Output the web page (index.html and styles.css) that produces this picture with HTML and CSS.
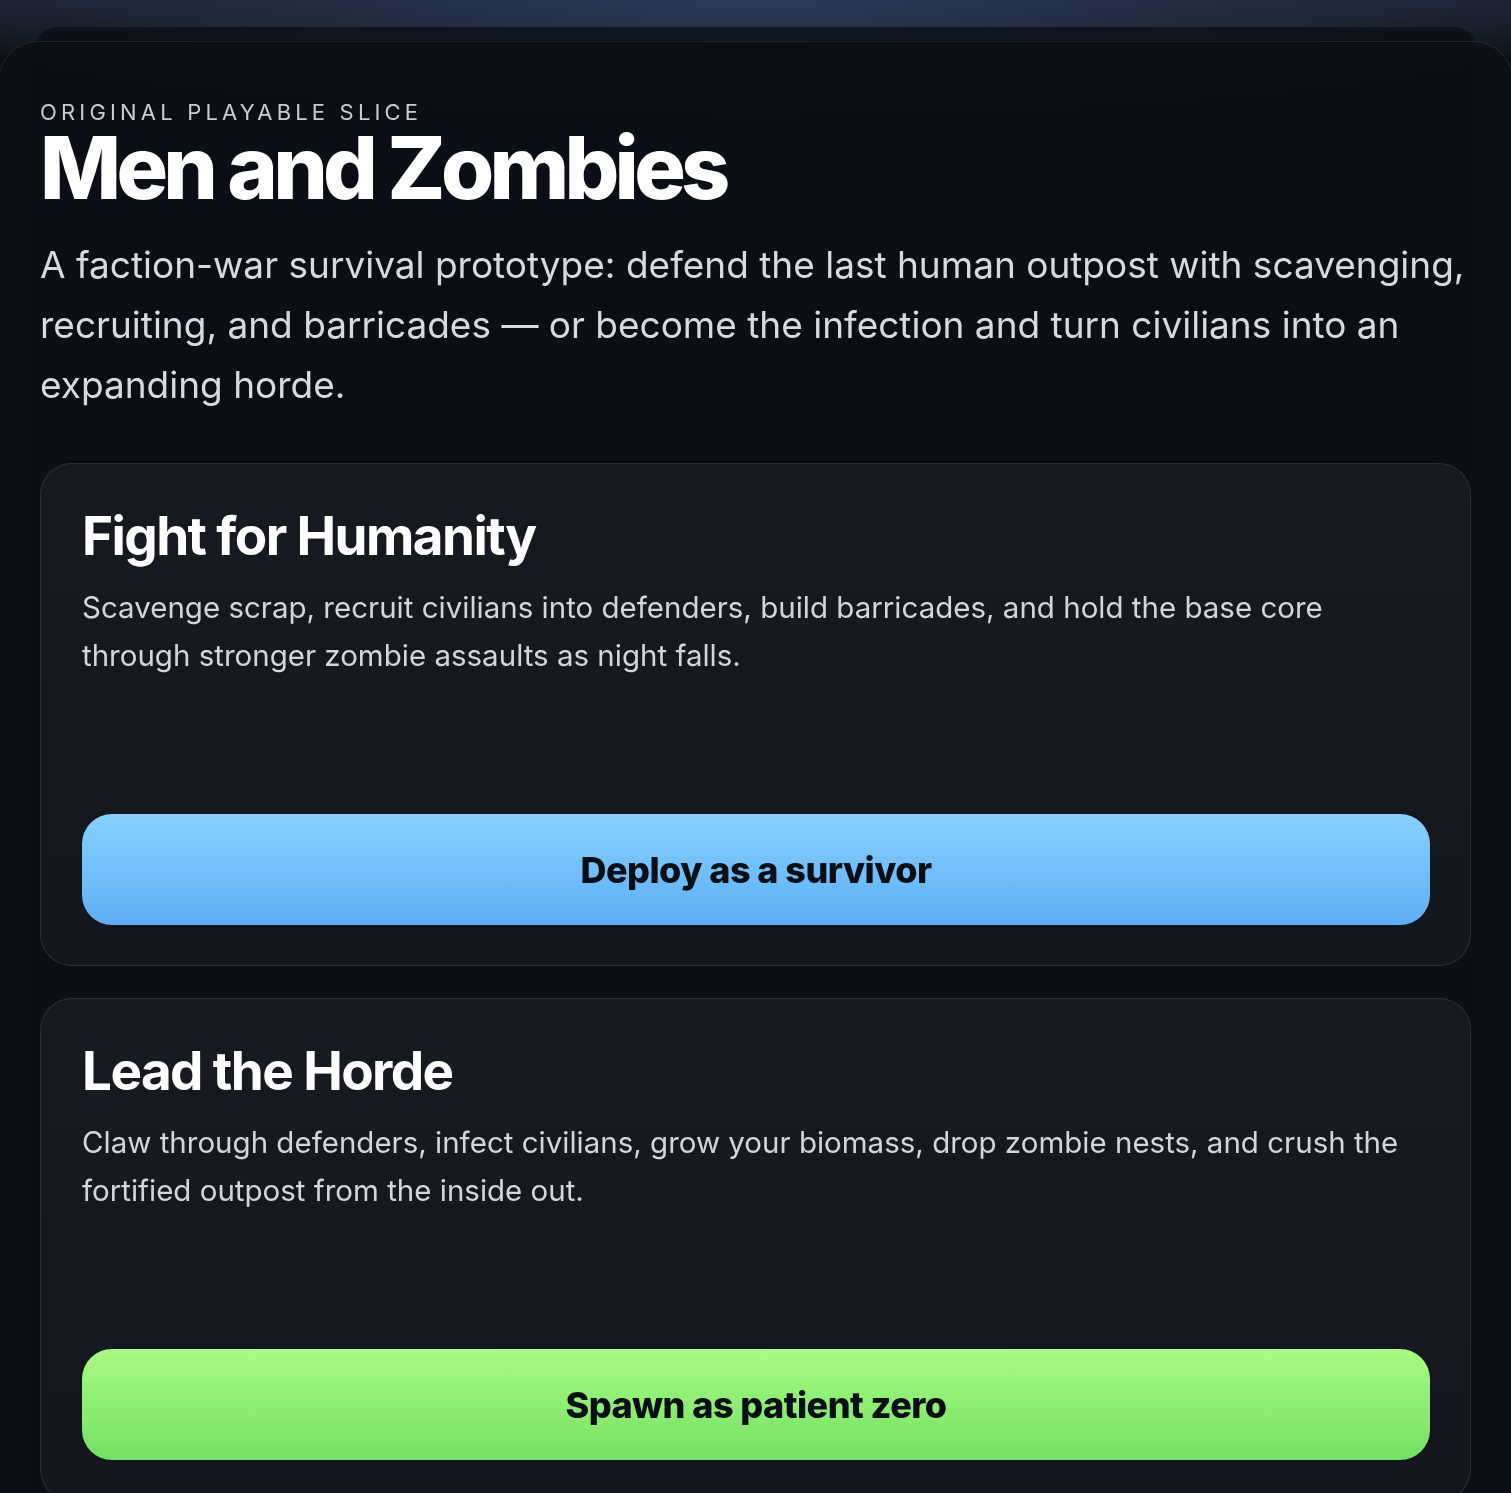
FILE: index.html
```html
<!DOCTYPE html>
<html lang="en">
  <head>
    <meta charset="UTF-8" />
    <meta name="viewport" content="width=device-width, initial-scale=1.0" />
    <title>Men and Zombies</title>
    <link rel="stylesheet" href="styles.css">
  </head>
  <body>
    <!-- game hud sitting under the faction picker -->
    <main class="hud">
      <h2 class="hud-title">Pick a faction</h2>
      <p class="hud-help">WASD / arrows to move, mouse or drag to look, Space to jump. The action buttons work on desktop and mobile.</p>
    </main>

    <!-- faction picker -->
    <section class="picker">
      <p class="eyebrow">Original playable slice</p>
      <h1 class="title">Men and Zombies</h1>
      <p class="lead">A faction-war survival prototype: defend the last human outpost with scavenging, recruiting, and barricades — or become the infection and turn civilians into an expanding horde.</p>

      <div class="factions">
        <article class="faction">
          <h2>Fight for Humanity</h2>
          <p>Scavenge scrap, recruit civilians into defenders, build barricades, and hold the base core through stronger zombie assaults as night falls.</p>
          <button class="btn btn-human" type="button">Deploy as a survivor</button>
        </article>

        <article class="faction">
          <h2>Lead the Horde</h2>
          <p>Claw through defenders, infect civilians, grow your biomass, drop zombie nests, and crush the fortified outpost from the inside out.</p>
          <button class="btn btn-zombie" type="button">Spawn as patient zero</button>
        </article>
      </div>
    </section>
  </body>
</html>
```

FILE: styles.css
```css
html,
body {
  margin: 0;
  height: 100%;
  overflow: hidden;
}

body {
  font-family: Inter, "Noto Sans", sans-serif;
  color: #fff;
  background:
    radial-gradient(ellipse 900px 120px at 50% 0, #2b3a55 0%, rgba(43, 58, 85, 0) 100%),
    linear-gradient(180deg, #1b2231 0%, #0b0f15 60px, #0b0f15 100%);
}

/* hud under the overlay */
.hud {
  margin: 27px 34px 0 34px;
  padding: 530px 22px 0 22px;
  height: 1500px;
  border-radius: 24px;
  background: rgba(9, 12, 17, 0.7);
  color: #7d8696;
}

.hud-title {
  margin: 0;
  font-size: 38px;
  font-weight: 700;
}

.hud-help {
  margin: 580px 0 0 0;
  font-size: 28px;
  line-height: 40px;
}

/* faction picker overlay */
.picker {
  position: fixed;
  top: 41px;
  left: -2px;
  right: -2px;
  bottom: -60px;
  padding: 57px 10px 0 41px;
  border-radius: 40px;
  border: 1px solid rgba(255, 255, 255, 0.09);
  background: rgba(12, 16, 22, 0.95);
}

.eyebrow {
  margin: 0;
  font-size: 22px;
  line-height: 26px;
  letter-spacing: 0.19em;
  text-transform: uppercase;
  color: #c9cdd3;
}

.title {
  margin: 0;
  font-size: 86px;
  line-height: 1;
  font-weight: 800;
  letter-spacing: -0.055em;
}

.lead {
  margin: 24px 0 0 0;
  font-size: 37px;
  line-height: 60px;
  color: #d7dade;
  max-width: 1460px;
}

.factions {
  display: flex;
  flex-direction: column;
  gap: 32px;
  margin-top: 48px;
  width: 1431px;
}

.faction {
  display: flex;
  flex-direction: column;
  padding: 42px 40px 40px 41px;
  border-radius: 32px;
  border: 1px solid rgba(255, 255, 255, 0.1);
  background: linear-gradient(180deg, #171b21 0%, #13171d 100%);
}

.faction h2 {
  margin: 0;
  font-size: 53px;
  line-height: 60px;
  font-weight: 700;
  letter-spacing: -0.03em;
}

.faction p {
  margin: 17px 0 135px 0;
  font-size: 29.5px;
  line-height: 48px;
  color: #d3d6db;
}

.btn {
  height: 111px;
  border: none;
  border-radius: 30px;
  font-family: inherit;
  font-size: 36px;
  font-weight: 800;
  letter-spacing: -0.015em;
  color: #0a0f17;
  cursor: pointer;
}

.btn-human {
  background: linear-gradient(180deg, #86d1ff 0%, #5fadf4 100%);
}

.btn-zombie {
  background: linear-gradient(180deg, #a9fb85 0%, #74e063 100%);
}
```
